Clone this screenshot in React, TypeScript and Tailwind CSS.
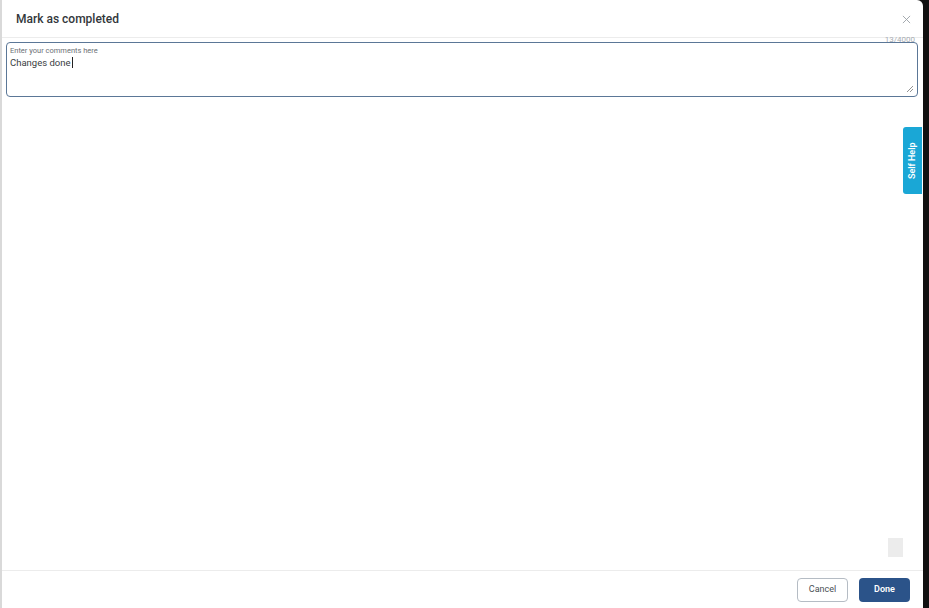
import React from "react";

export default function App() {
  return (
    <div className="w-[929px] h-[608px] bg-[#111] flex overflow-hidden" style={{ fontFamily: "Roboto, 'Liberation Sans', sans-serif" }}>
      <div className="w-[923px] h-[608px] bg-white rounded-tr-[6px] border-l-2 border-[#d9d9d9] flex flex-col relative">
        {/* header */}
        <div className="h-[38px] flex items-center justify-between pl-[14px] pr-[12px] border-b border-[#ececec] shrink-0">
          <span className="text-[12px] text-[#33373b] font-medium">Mark as completed</span>
          <svg width="9" height="9" viewBox="0 0 10 10" className="mt-[1px]">
            <path d="M1 1L9 9M9 1L1 9" stroke="#9aa0a6" strokeWidth="1" />
          </svg>
        </div>
        {/* body */}
        <div className="flex-1 flex flex-col px-[4px]">
          <div className="relative">
            <div className="absolute right-[4px] top-[-2px] text-[8px] leading-[8px] text-[#a8adb3]">13/4000</div>
          </div>
          <div className="mt-[4px] h-[55px] border-[1.5px] border-[#5b7797] rounded-[4px] px-[3px] pt-[3px] relative mr-[1px]">
            <div className="text-[7.5px] leading-[10px] text-[#6b7075]">Enter your comments here</div>
            <div className="text-[9.5px] leading-[13px] text-[#3a3e42] flex items-center">
              Changes done<span className="inline-block w-[1px] h-[11px] bg-[#222] ml-[1px]"></span>
            </div>
            <svg width="8" height="8" viewBox="0 0 8 8" className="absolute right-[3px] bottom-[3px]">
              <path d="M7 1L1 7M7 4L4 7" stroke="#777" strokeWidth="0.8" />
            </svg>
          </div>
          <div className="flex-1 relative">
            <div className="absolute right-[-3px] top-[30px] w-[19px] h-[67px] bg-[#1aa7d6] rounded-l-[3px] flex items-center justify-center">
              <span className="text-white text-[9px] font-semibold whitespace-nowrap -rotate-90">Self Help</span>
            </div>
            <div className="absolute right-[16px] bottom-[13px] w-[15px] h-[19px] bg-[#ececec]"></div>
          </div>
        </div>
        {/* footer */}
        <div className="h-[38px] border-t border-[#ececec] flex items-center justify-end gap-[11px] pr-[13px] shrink-0">
          <button className="w-[51px] h-[24px] border border-[#b5bcc4] rounded-[4px] bg-white text-[9px] text-[#4a4f55]">Cancel</button>
          <button className="w-[51px] h-[24px] rounded-[4px] bg-[#2b5389] text-[9px] text-white font-semibold">Done</button>
        </div>
      </div>
    </div>
  );
}
